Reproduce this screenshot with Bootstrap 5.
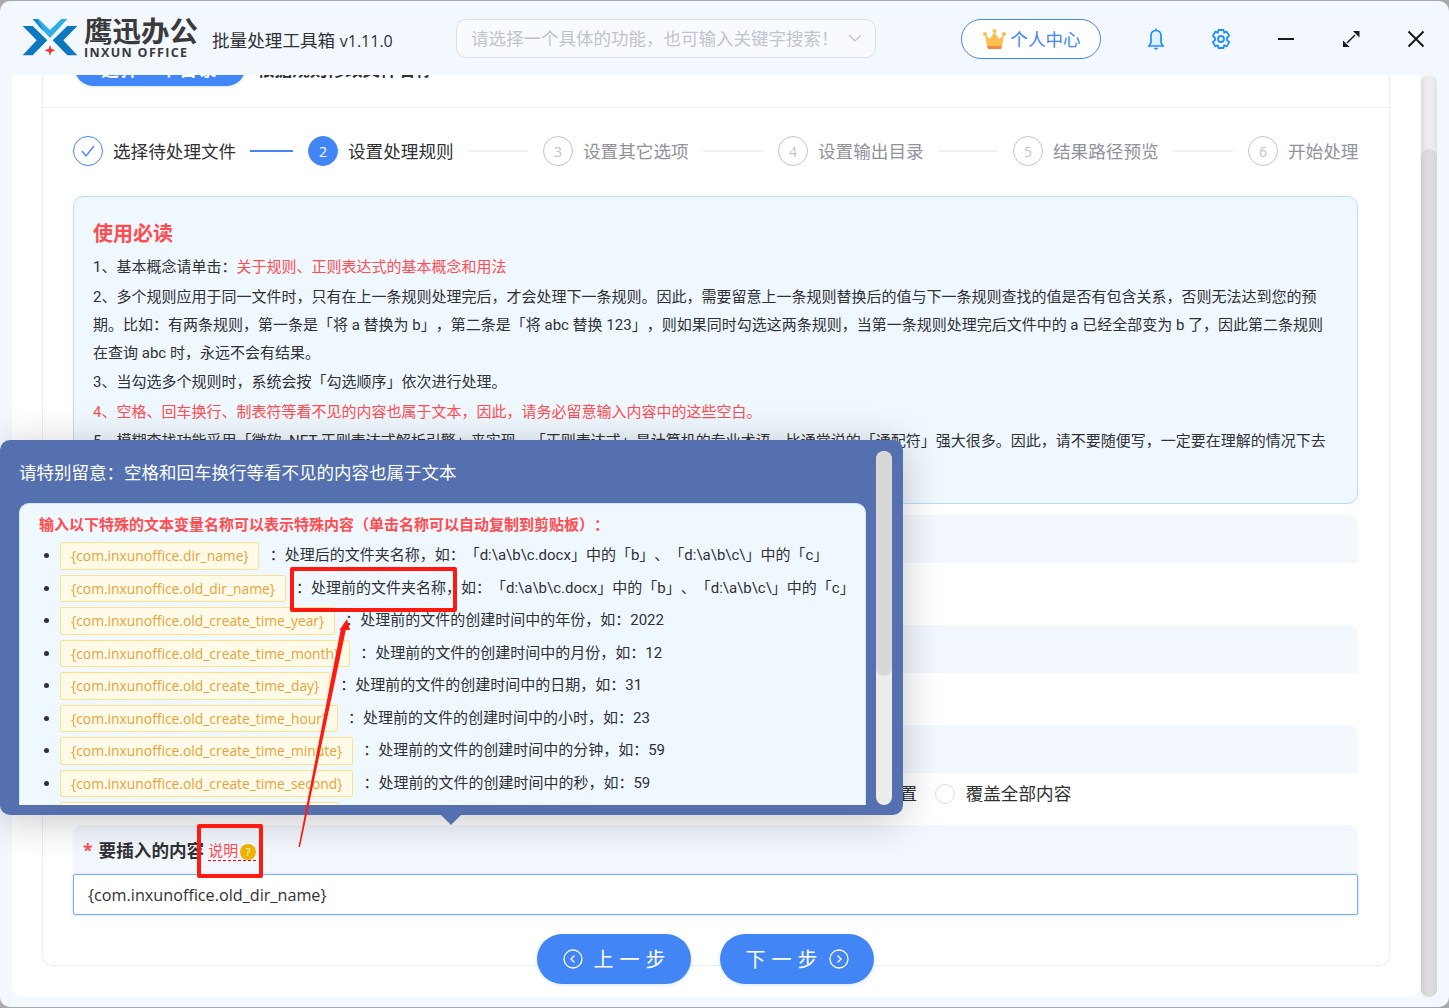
<!DOCTYPE html>
<html lang="zh-CN">
<head>
  <meta charset="UTF-8" />
  <meta name="viewport" content="width=device-width, initial-scale=1" />
  <title>批量处理工具箱</title>
  <link href="https://cdn.jsdelivr.net/npm/bootstrap@5.3.3/dist/css/bootstrap.min.css" rel="stylesheet" />
  <style>
    html, body { height: 100%; }
    body {
      background: #a9a9ad;
      font-family: "Open Sans", "Noto Sans CJK SC", sans-serif;
      color: #303133;
      overflow: hidden;
      text-spacing-trim: space-all;
    }
    .app-win {
      position: relative;
      width: 1449px;
      height: 1006px;
      margin-top: 1px;
      background: #f3f7fe;
      border-radius: 10px;
      overflow: hidden;
    }
    .app-head { height: 74px; padding-left: 20px; }
    .logo-block { width: 114px; margin-left: 4px; flex: none; }
    .logo-cn { font-size: 28.5px; font-weight: 700; line-height: 29px; color: #3a3a3c; white-space: nowrap; }
    .logo-en { font-size: 12.5px; font-weight: 700; line-height: 13px; letter-spacing: 1.35px; color: #3a3a3c; white-space: nowrap; }
    .app-ver { font-size: 17.6px; color: #303133; margin-left: 14px; margin-top: 4px; width: 244px; flex: none; }
    .ver-num { font-size: 16px; }
    .search-box {
      width: 420px; height: 39px; border: 1px solid #dcdfe6; border-radius: 10px; flex: none;
      padding: 0 13px 0 14px; color: #c0c4cc; font-size: 17.5px; background: #f8fafe; white-space: nowrap;
    }
    .user-pill {
      width: 140px; height: 40px; margin-left: 85px; margin-top: 1px; padding: 1px 0 0 2px; border: 1px solid #4285f5; border-radius: 20px;
      background: #fff; color: #4285f5; font-size: 17.6px; flex: none;
    }
    .head-icon { position: absolute; top: 26px; width: 24px; height: 24px; }

    .app-main { height: 932px; }
    .white-panel { width: 1408px; margin-left: 12px; height: 922px; background: #fff; overflow: hidden; border-bottom-left-radius: 10px; border-bottom-right-radius: 10px; padding: 0 30px; }
    .inner-box { border: 1px solid #ebeef5; border-top: 0; border-radius: 0 0 10px 10px; width: 1348px; height: 891px; padding: 0 31px 0 30px; }
    .top-strip { height: 33px; margin: 0 -31px 0 -30px; padding: 0 31px; border-bottom: 1px solid #ebeef5; color: #303133; font-size: 17.6px; font-weight: 700; }
    .top-pill { width: 172px; height: 50px; margin-top: -39px; border-radius: 20px; background: #4285f5; color: #fff; letter-spacing: 2px; white-space: nowrap; flex: none; box-shadow: 0 1px 3px rgba(66,133,245,.2); }
    .top-tail { margin-top: -19px; margin-left: 11px; line-height: 26px; white-space: nowrap; }

    .page-bar { width: 16px; background: linear-gradient(90deg, #dedede, #ededed 35%, #ededed 70%, #e2e2e2); margin-left: 1px; border-radius: 8px; height: 922px; overflow: hidden; flex: none; }
    .page-thumb { height: 100%; margin-top: 74px; background: linear-gradient(90deg, #cfcfcf, #dcdcdc 40%, #dcdcdc 70%, #d2d2d2); border-radius: 8px; }

    .step-row { height: 88px; padding-bottom: 2px; }
    .step-item { flex: 0 0 235px; }
    .step-item:last-child { flex: 0 0 auto; }
    .step-dot {
      width: 30px; height: 30px; border-radius: 50%; border: 1px solid #c0c4cc; color: #c0c4cc;
      font-size: 14px; flex: none;
    }
    .step-name { font-size: 17.6px; margin-left: 10px; color: #909399; white-space: nowrap; }
    .step-line { flex: 1; height: 2px; background: #f0f0f0; margin: 0 15px 0 14px; }
    .step-done .step-dot { border-color: #4285f5; }
    .step-done .step-name, .step-now .step-name { color: #303133; }
    .step-done .step-line { background: #4285f5; }
    .step-now .step-dot { background: #4285f5; border-color: #4285f5; color: #fff; }

    .notice-box {
      height: 308px; background: #eff7ff; border: 1px solid #bcdcff; border-radius: 10px;
      padding: 21px 19px; font-family: Roboto, "Noto Sans CJK SC", sans-serif; font-size: 15px; overflow: hidden;
    }
    .notice-title { font-size: 20px; font-weight: 700; color: #ff4d4f; line-height: 32px; margin-bottom: 3px; }
    .notice-line { line-height: 28px; margin-bottom: 1.5px; }
    .hot-text { color: #ff4d4f; }

    .form-stripe {
      height: 48px; background: #f3f7fe; border-radius: 10px 10px 0 0; margin-top: 11px;
      padding: 0 10px; font-size: 17.6px; font-weight: 700;
    }
    .form-gap { height: 52px; }
    .form-gap-big { height: 62px; }
    .star-mark { color: #ff4d4f; margin-right: 6px; }
    .label-stripe { padding-top: 2px; }
    .radio-row { height: 52px; font-size: 17.6px; padding: 7px 0 0 721px; }
    .radio-prev { margin-right: 17.500px; white-space: nowrap; }
    .radio-dot { width: 20px; height: 20px; border: 1px solid #dcdfe6; border-radius: 50%; background: #fff; margin-right: 11px; flex: none; }
    .help-link { color: #ff4d4f; font-size: 15px; font-weight: 400; border-bottom: 1px dashed #ff0000; margin-left: 4px; line-height: 20px; margin-top: 1px; }
    .help-dot { display: inline-flex; width: 16px; height: 16px; border-radius: 50%; background: #f0b400; color: #fff; font-size: 11px; align-items: center; justify-content: center; margin-left: 2px; }
    .value-input {
      height: 41px; border: 1px solid #79adfa; box-shadow: 0 0 3px rgba(66,133,245,.35); border-radius: 2px;
      background: #fff; padding: 0 14px; font-size: 16.2px; line-height: 40px; margin-top: 1px;
    }
    .btn-row { margin-top: 19px; margin-right: 20px; position: relative; gap: 29px; }
    .step-btn {
      width: 154px; height: 50px; border-radius: 25px; background: #4285f5; color: #fff; font-size: 20px;
      border: 0; padding: 2px 0 0; gap: 11px; box-shadow: 0 1px 4px rgba(66,133,245,.2);
    }
    .step-btn svg { flex: none; margin-top: -2px; }
    .step-label { letter-spacing: 6px; margin-right: -6px; }

    /* popover */
    .tip-pop {
      position: absolute; left: 0; top: 439px; width: 903px; height: 375px; background: #5470ae;
      border-radius: 10px; box-shadow: 0 6px 40px rgba(0,0,0,.22);
    }
    .tip-pop::after {
      content: ""; position: absolute; left: 441px; top: 100%;
      border-left: 10px solid transparent; border-right: 10px solid transparent; border-top: 10px solid #5470ae;
    }
    .tip-title { color: #fff; font-size: 17.5px; line-height: 26px; position: absolute; left: 19px; top: 19px; }
    .tip-body {
      position: absolute; left: 19px; top: 63px; width: 847px; height: 302px; background: #eff7ff;
      border: 1px solid #cfe6ff; border-bottom: 0; border-radius: 10px 10px 0 0; padding: 11px 19px 0; overflow: hidden;
      font-family: Roboto, "Noto Sans CJK SC", sans-serif; font-size: 15px;
    }
    .tip-head { color: #ff4d4f; font-weight: 700; line-height: 20px; margin-bottom: 7px; white-space: nowrap; }
    .var-list { padding-left: 21px; margin: 0; }
    .var-list li { height: 32.5px; line-height: 27px; white-space: nowrap; }
    .var-tag {
      display: inline-block; height: 27.5px; line-height: 25px; padding: 0 9.500px 0 10px; background: #fffbe8;
      font-family: "Open Sans", sans-serif; font-size: 13.85px;
      border: 1px solid #ffe08a; border-radius: 2px; color: #e6a23c; vertical-align: top; margin-right: 10.500px;
    }
    .tip-bar { position: absolute; left: 876px; top: 11px; width: 16px; height: 354px; border-radius: 8px; background: #ececec; overflow: hidden; }
    .tip-thumb { height: 225px; background: #d8d8d8; border-radius: 8px; }

    /* annotations on top of the screenshot */
    .red-box { position: absolute; border: 4px solid #ff1a10; border-radius: 2px; }
    .red-box-a { left: 290px; top: 566px; width: 167px; height: 45px; }
    .red-box-b { left: 197px; top: 823px; width: 66px; height: 54px; }
    .red-arrow { position: absolute; left: 280px; top: 600px; width: 90px; height: 260px; }
  </style>
</head>
<body>
  <div class="app-win">

    <header class="app-head d-flex align-items-center">
      <svg width="60" height="44" viewBox="0 0 180 132" class="flex-shrink-0">
        <path d="M8 30H38L82 73 38 118H8L50 73Z" fill="#0e78be" />
        <path d="M172 30H142L98 73 142 118H172L130 73Z" fill="#0e78be" />
        <path d="M38 9H56L90 42 124 9H142L90 66Z" fill="#2caee6" />
        <path d="M38 9H52L72 47 63 38Z" fill="#1689cc" />
        <path d="M90 87L94 98 106 103 94 108 90 119 86 108 74 103 86 98Z" fill="#e8383a" />
      </svg>
      <div class="logo-block">
        <div class="logo-cn">鹰迅办公</div>
        <div class="logo-en">INXUN OFFICE</div>
      </div>
      <div class="app-ver">批量处理工具箱 <span class="ver-num">v1.11.0</span></div>
      <div class="search-box d-flex align-items-center justify-content-between">
        <span>请选择一个具体的功能，也可输入关键字搜索！</span>
        <svg width="14" height="14" viewBox="0 0 14 14" fill="none" stroke="#c0c4cc" stroke-width="1.4"><path d="M1 4l6 6 6-6" /></svg>
      </div>
      <div class="user-pill d-flex align-items-center justify-content-center">
        <svg width="23" height="21" viewBox="0 0 23 21" class="me-1">
          <path d="M2 6l5 4 4.500-7 4.500 7 5-4-2 11H4Z" fill="#fbbf4d" />
          <circle cx="2" cy="5" r="2" fill="#fbbf4d" /><circle cx="11.5" cy="2" r="2" fill="#fbbf4d" /><circle cx="21" cy="5" r="2" fill="#fbbf4d" />
          <path d="M4 17h15l-1 3H5Z" fill="#f58540" />
        </svg>
        <span>个人中心</span>
      </div>
      <svg class="head-icon" style="left:1144px" viewBox="0 0 24 24" fill="#e3f1ff" stroke="#1f8fff" stroke-width="1.7">
        <path d="M12 3.500c-3.500 0-5 2.500-5 5.500v6.500L5 19h14l-2-3.500V9c0-3-1.500-5.500-5-5.500Z" /><path d="M10.500 21a2 2 0 0 0 3 0" fill="none" /><path d="M12 1.500V3.500" />
      </svg>
      <svg class="head-icon" style="left:1209px" viewBox="0 0 24 24" fill="none" stroke="#1f8fff" stroke-width="1.800">
        <path d="M9.500 3h5l.7 2.700 2.500-1.100 2.500 4.300-2.200 1.800v2.600l2.200 1.800-2.500 4.300-2.500-1.100-.7 2.700h-5l-.7-2.700-2.500 1.100-2.500-4.300 2.200-1.800v-2.600L3.800 8.900l2.500-4.300 2.500 1.100Z" stroke-linejoin="round" /><circle cx="12" cy="12" r="3" />
      </svg>
      <svg class="head-icon" style="left:1274px" viewBox="0 0 24 24" fill="none" stroke="#1a1a1a" stroke-width="2"><path d="M4 12h16" /></svg>
      <svg class="head-icon" style="left:1339px" viewBox="0 0 24 24"><path d="M8 16l8-8" stroke="#1a1a1a" stroke-width="1.500" /><path d="M14 4h6.500v6.500ZM4 13.500v6.500h6.500Z" fill="#1a1a1a" /></svg>
      <svg class="head-icon" style="left:1404px" viewBox="0 0 24 24" fill="none" stroke="#1a1a1a" stroke-width="2"><path d="M4.500 4.500l15 15M19.500 4.500l-15 15" /></svg>
    </header>

    <div class="app-main d-flex">
      <div class="white-panel">
        <div class="inner-box">
          <div class="top-strip d-flex">
            <div class="top-pill d-flex align-items-end justify-content-center pb-1">选择一个目录</div>
            <div class="top-tail">根据规则修改文件名称</div>
          </div>

          <div class="step-row d-flex align-items-center">
            <div class="step-item step-done d-flex align-items-center">
              <div class="step-dot d-flex align-items-center justify-content-center">
                <svg width="16" height="14" viewBox="0 0 16 14" fill="none" stroke="#4285f5" stroke-width="1.300"><path d="M2 7l4 5 8-10" /></svg>
              </div>
              <span class="step-name">选择待处理文件</span><span class="step-line"></span>
            </div>
            <div class="step-item step-now d-flex align-items-center">
              <div class="step-dot d-flex align-items-center justify-content-center">2</div>
              <span class="step-name">设置处理规则</span><span class="step-line"></span>
            </div>
            <div class="step-item d-flex align-items-center">
              <div class="step-dot d-flex align-items-center justify-content-center">3</div>
              <span class="step-name">设置其它选项</span><span class="step-line"></span>
            </div>
            <div class="step-item d-flex align-items-center">
              <div class="step-dot d-flex align-items-center justify-content-center">4</div>
              <span class="step-name">设置输出目录</span><span class="step-line"></span>
            </div>
            <div class="step-item d-flex align-items-center">
              <div class="step-dot d-flex align-items-center justify-content-center">5</div>
              <span class="step-name">结果路径预览</span><span class="step-line"></span>
            </div>
            <div class="step-item d-flex align-items-center">
              <div class="step-dot d-flex align-items-center justify-content-center">6</div>
              <span class="step-name">开始处理</span>
            </div>
          </div>

          <div class="notice-box">
            <div class="notice-title">使用必读</div>
            <div class="notice-line">1、基本概念请单击：<span class="hot-text">关于规则、正则表达式的基本概念和用法</span></div>
            <div class="notice-line">2、多个规则应用于同一文件时，只有在上一条规则处理完后，才会处理下一条规则。因此，需要留意上一条规则替换后的值与下一条规则查找的值是否有包含关系，否则无法达到您的预期。比如：有两条规则，第一条是「将 a 替换为 b」，第二条是「将 abc 替换 123」，则如果同时勾选这两条规则，当第一条规则处理完后文件中的 a 已经全部变为 b 了，因此第二条规则在查询 abc 时，永远不会有结果。</div>
            <div class="notice-line">3、当勾选多个规则时，系统会按「勾选顺序」依次进行处理。</div>
            <div class="notice-line hot-text">4、空格、回车换行、制表符等看不见的内容也属于文本，因此，请务必留意输入内容中的这些空白。</div>
            <div class="notice-line">5、模糊查找功能采用「微软 .NET 正则表达式解析引擎」来实现，「正则表达式」是计算机的专业术语，比通常说的「通配符」强大很多。因此，请不要随便写，一定要在理解的情况下去使用。</div>
          </div>

          <div class="form-stripe"></div>
          <div class="form-gap-big"></div>
          <div class="form-stripe m-0"></div>
          <div class="form-gap"></div>
          <div class="form-stripe m-0"></div>
          <div class="radio-row d-flex align-items-start">
            <span class="radio-prev">插入到指定位置</span><span class="radio-dot mt-1"></span><span>覆盖全部内容</span>
          </div>
          <div class="form-stripe label-stripe m-0 d-flex align-items-center">
            <span class="star-mark">*</span><span>要插入的内容</span>
            <span class="help-link">说明<span class="help-dot">?</span></span>
          </div>
          <div class="value-input">{com.inxunoffice.old_dir_name}</div>

          <div class="btn-row d-flex justify-content-center">
            <button class="step-btn d-flex align-items-center justify-content-center" type="button">
              <svg width="20" height="20" viewBox="0 0 20 20" fill="none" stroke="#fff" stroke-width="1.300"><circle cx="10" cy="10" r="9" /><path d="M11.500 6.500L8 10l3.500 3.500" /></svg>
              <span class="step-label">上一步</span>
            </button>
            <button class="step-btn d-flex align-items-center justify-content-center" type="button">
              <span class="step-label">下一步</span>
              <svg width="20" height="20" viewBox="0 0 20 20" fill="none" stroke="#fff" stroke-width="1.300"><circle cx="10" cy="10" r="9" /><path d="M8.500 6.500L12 10l-3.500 3.500" /></svg>
            </button>
          </div>
        </div>
      </div>
      <div class="page-bar"><div class="page-thumb"></div></div>
    </div>

    <div class="tip-pop">
      <div class="tip-title">请特别留意：空格和回车换行等看不见的内容也属于文本</div>
      <div class="tip-body">
        <div class="tip-head">输入以下特殊的文本变量名称可以表示特殊内容（单击名称可以自动复制到剪贴板）：</div>
        <ul class="var-list">
          <li><span class="var-tag">{com.inxunoffice.dir_name}</span><span>：处理后的文件夹名称，如：「d:\a\b\c.docx」中的「b」、「d:\a\b\c\」中的「c」</span></li>
          <li><span class="var-tag">{com.inxunoffice.old_dir_name}</span><span>：处理前的文件夹名称，如：「d:\a\b\c.docx」中的「b」、「d:\a\b\c\」中的「c」</span></li>
          <li><span class="var-tag">{com.inxunoffice.old_create_time_year}</span><span>：处理前的文件的创建时间中的年份，如：2022</span></li>
          <li><span class="var-tag">{com.inxunoffice.old_create_time_month}</span><span>：处理前的文件的创建时间中的月份，如：12</span></li>
          <li><span class="var-tag">{com.inxunoffice.old_create_time_day}</span><span>：处理前的文件的创建时间中的日期，如：31</span></li>
          <li><span class="var-tag">{com.inxunoffice.old_create_time_hour}</span><span>：处理前的文件的创建时间中的小时，如：23</span></li>
          <li><span class="var-tag">{com.inxunoffice.old_create_time_minute}</span><span>：处理前的文件的创建时间中的分钟，如：59</span></li>
          <li><span class="var-tag">{com.inxunoffice.old_create_time_second}</span><span>：处理前的文件的创建时间中的秒，如：59</span></li>
          <li><span class="var-tag">{com.inxunoffice.old_modify_time_year}</span><span>：处理前的文件的修改时间中的年份</span></li>
        </ul>
      </div>
      <div class="tip-bar"><div class="tip-thumb"></div></div>
    </div>

    <div class="red-box red-box-a"></div>
    <div class="red-box red-box-b"></div>
    <svg class="red-arrow" viewBox="0 0 90 260">
      <path d="M18.500 246L61 27 66 28 20 246Z" fill="#ff1a10" />
      <path d="M67 18L59.500 29 70 29Z" fill="#ff1a10" />
    </svg>
  </div>
</body>
</html>
